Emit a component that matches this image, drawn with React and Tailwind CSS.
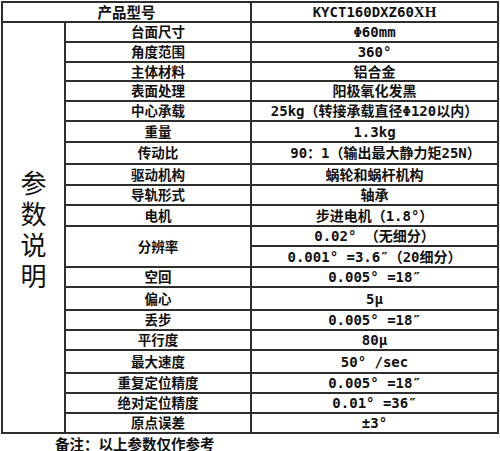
import React from "react";

const rows = [
  ["台面尺寸", "Φ60mm"],
  ["角度范围", "360°"],
  ["主体材料", "铝合金"],
  ["表面处理", "阳极氧化发黑"],
  ["中心承载", "25kg（转接承载直径Φ120以内）"],
  ["重量", "1.3kg"],
  ["传动比", "90：1（输出最大静力矩25N）", "pl-[22px]"],
  ["驱动机构", "蜗轮和蜗杆机构"],
  ["导轨形式", "轴承"],
  ["电机", "步进电机（1.8°）"],
];

const rows2 = [
  ["空回", "0.005° =18″"],
  ["偏心", "5μ"],
  ["丢步", "0.005° =18″"],
  ["平行度", "80μ"],
  ["最大速度", "50° /sec"],
  ["重复定位精度", "0.005° =18″"],
  ["绝对定位精度", "0.01° =36″"],
  ["原点误差", "±3°"],
];

const labelCls =
  "col-start-2 bg-white flex items-center justify-center leading-none text-[13.5px] font-bold text-[#111] font-['Noto_Sans_CJK_SC',sans-serif]";
const valueCls =
  "col-start-3 bg-white flex items-center justify-center leading-none text-[14px] font-bold text-[#111] whitespace-pre font-['DejaVu_Sans_Mono','Noto_Sans_CJK_SC',monospace]";

export default function App() {
  return (
    <div className="w-[500px] h-[451px] bg-white overflow-hidden">
      <div className="ml-[1px] mt-[1px] w-[498px] p-[2px] gap-[2px] bg-[#2e2e2e] grid grid-cols-[61px_184px_245px] grid-rows-[18px_18px_18px_17px_18px_18px_19px_20px_19px_18px_19px_18px_19px_18px_21px_18px_18px_21px_18px_18px_18px]">
        <div className="col-span-2 bg-white flex items-center justify-center leading-none text-[14.5px] font-bold text-[#111] font-['Noto_Sans_CJK_SC',sans-serif]">
          产品型号
        </div>
        <div className={valueCls}>
          KYCT160DXZ60
          <span className="font-['Liberation_Serif',serif] text-[15px] bg-white">XH</span>
        </div>
        <div className="col-start-1 row-span-20 bg-white flex flex-col items-center justify-center text-[26px] leading-[31px] text-[#111] font-['Noto_Sans_CJK_SC',sans-serif]">
          <span>参</span>
          <span>数</span>
          <span>说</span>
          <span>明</span>
        </div>
        {rows.map(([l, v, extra]) => (
          <React.Fragment key={l}>
            <div className={labelCls}>{l}</div>
            <div className={valueCls + (extra ? " " + extra : "")}>{v}</div>
          </React.Fragment>
        ))}
        <div className={labelCls + " row-span-2"}>分辨率</div>
        <div className={valueCls}>0.02° （无细分）</div>
        <div className={valueCls}>0.001° =3.6″（20细分）</div>
        {rows2.map(([l, v]) => (
          <React.Fragment key={l}>
            <div className={labelCls}>{l}</div>
            <div className={valueCls}>{v}</div>
          </React.Fragment>
        ))}
      </div>
      <div className="ml-[55px] mt-[3px] text-[14.5px] leading-[14px] font-bold text-[#111] font-['Noto_Sans_CJK_SC',sans-serif]">
        备注：以上参数仅作参考
      </div>
    </div>
  );
}
